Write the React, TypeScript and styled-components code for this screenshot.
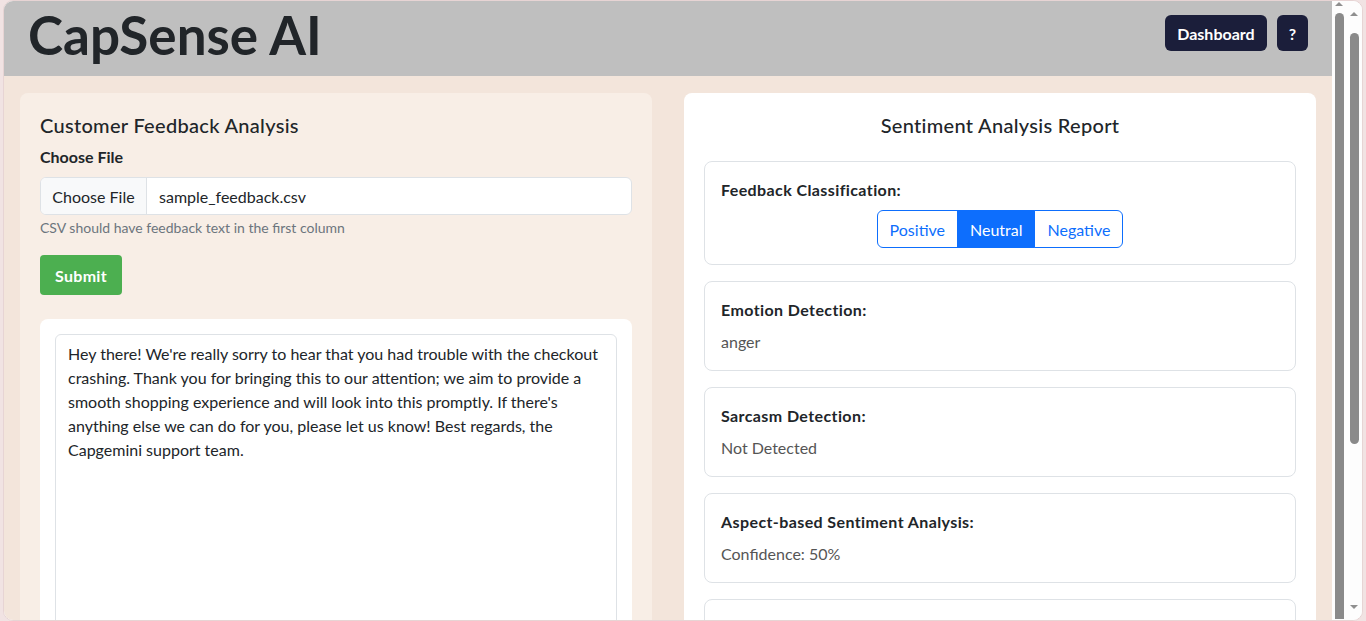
import React from "react";
import styled, { createGlobalStyle } from "styled-components";

const Global = createGlobalStyle`
  html, body { margin: 0; padding: 0; height: 100%; overflow: hidden; background: #f1e3e3; }
  body { font-family: Lato, "Noto Sans", sans-serif; color: #212529; }
  #root { height: 100%; }
  * { box-sizing: border-box; }
`;

const Frame = styled.div`
  height: 621px;
  margin: 0 3px;
  border: 1px solid #e7d4d4;
  border-radius: 10px;
  overflow: hidden;
  display: flex;
  background: #fdfdfd;
`;

const AppColumn = styled.div`
  flex: 0 0 1328px;
  display: flex;
  flex-direction: column;
  min-height: 0;
`;

const Header = styled.header`
  flex: 0 0 75px;
  background: #bfbfbf;
  display: flex;
  align-items: flex-start;
  justify-content: space-between;
  padding: 7px 24px 0;
`;

const Brand = styled.h1`
  margin: 0;
  font-size: 53px;
  font-weight: 700;
  line-height: 1;
  color: #212529;
`;

const HeaderActions = styled.div`
  display: flex;
  gap: 10px;
  margin-top: 7px;
`;

const DarkButton = styled.button`
  height: 36px;
  padding: 0 12px;
  border: none;
  border-radius: 6px;
  background: #1b1e3a;
  color: #fff;
  font: 700 16px Lato, "Noto Sans", sans-serif;
`;

const Main = styled.main`
  flex: 1;
  min-height: 0;
  overflow: hidden;
  background: #f3e5db;
  padding: 17px 16px 0;
  display: grid;
  grid-template-columns: 1fr 1fr;
  gap: 32px;
  align-items: start;
`;

const Card = styled.section<{ $tone: "beige" | "white" }>`
  background: ${(p) => (p.$tone === "beige" ? "#f8eee6" : "#ffffff")};
  border-radius: 8px;
  padding: 20px;
  min-height: 620px;
`;

const CardTitle = styled.h5<{ $center?: boolean }>`
  margin: 0 0 ${(p) => (p.$center ? "24px" : "8px")};
  font-size: 20px;
  font-weight: 500;
  line-height: 24px;
  letter-spacing: 0.3px;
  text-align: ${(p) => (p.$center ? "center" : "left")};
`;

const FieldLabel = styled.div`
  font-size: 16px;
  font-weight: 700;
  line-height: 24px;
  margin-bottom: 8px;
`;

const FileInput = styled.div`
  display: flex;
  height: 38px;
  border: 1px solid #dee2e6;
  border-radius: 6px;
  background: #fff;
  overflow: hidden;
  font-size: 16px;
`;

const FileButton = styled.span`
  flex: 0 0 106px;
  display: flex;
  align-items: center;
  justify-content: center;
  background: #f8f9fa;
  border-right: 1px solid #dee2e6;
`;

const FileName = styled.span`
  display: flex;
  align-items: center;
  padding-left: 12px;
`;

const Help = styled.div`
  margin-top: 2px;
  font-size: 14px;
  line-height: 21px;
  color: #6c757d;
`;

const SubmitButton = styled.button`
  margin-top: 17px;
  height: 40px;
  width: 82px;
  border: none;
  border-radius: 4px;
  background: #4caf50;
  color: #fff;
  font: 700 16px Lato, "Noto Sans", sans-serif;
  letter-spacing: 0.3px;
`;

const TextPanel = styled.div`
  margin-top: 24px;
  background: #fff;
  border-radius: 8px;
  padding: 15px;
`;

const Reply = styled.textarea`
  display: block;
  width: 100%;
  height: 420px;
  border: 1px solid #dee2e6;
  border-radius: 6px;
  padding: 7px 12px;
  font: 400 16px/24px Lato, "Noto Sans", sans-serif;
  color: #212529;
  resize: none;
  outline: none;
  background: #fff;
`;

const SubCard = styled.div`
  border: 1px solid #dee2e6;
  border-radius: 8px;
  padding: 16px;
  margin-bottom: 16px;
`;

const SubTitle = styled.div`
  font-size: 16px;
  font-weight: 700;
  line-height: 24px;
  letter-spacing: 0.4px;
  margin-bottom: 8px;
`;

const Value = styled.div`
  font-size: 16px;
  line-height: 24px;
  color: #555;
`;

const GroupRow = styled.div`
  display: flex;
  justify-content: center;
`;

const Segment = styled.button<{ $active?: boolean }>`
  height: 38px;
  padding: 0 12px;
  border: 1px solid #0d6efd;
  background: ${(p) => (p.$active ? "#0d6efd" : "#fff")};
  color: ${(p) => (p.$active ? "#fff" : "#0d6efd")};
  font: 400 16px Lato, "Noto Sans", sans-serif;
  margin-left: -1px;
  &:first-child { border-radius: 6px 0 0 6px; margin-left: 0; }
  &:last-child { border-radius: 0 6px 6px 0; }
`;

const Track = styled.div<{ $w: number; $pad: number }>`
  flex: 0 0 ${(p) => p.$w}px;
  display: flex;
  flex-direction: column;
  align-items: center;
  background: #fdfdfd;
  padding: ${(p) => p.$pad}px 0;
`;

const Arrow = styled.div<{ $down?: boolean }>`
  width: 0;
  height: 0;
  border-left: 4px solid transparent;
  border-right: 4px solid transparent;
  ${(p) => (p.$down ? "border-top: 4px solid #8f8f8f;" : "border-bottom: 4px solid #8f8f8f;")}
`;

const Thumb = styled.div<{ $h?: number; $top: number }>`
  width: 9px;
  margin-top: ${(p) => p.$top}px;
  border-radius: 5px;
  background: #8a8a8a;
  ${(p) => (p.$h ? `height: ${p.$h}px;` : "flex: 1; border-radius: 5px 5px 0 0;")}
`;

const Spacer = styled.div`
  flex: 1;
`;

const replyText =
  "Hey there! We're really sorry to hear that you had trouble with the checkout crashing. Thank you for bringing this to our attention; we aim to provide a smooth shopping experience and will look into this promptly. If there's anything else we can do for you, please let us know! Best regards, the Capgemini support team.";

export default function App() {
  return (
    <>
      <Global />
      <Frame>
        <AppColumn>
          <Header>
            <Brand>CapSense AI</Brand>
            <HeaderActions>
              <DarkButton>Dashboard</DarkButton>
              <DarkButton>?</DarkButton>
            </HeaderActions>
          </Header>
          <Main>
            <Card $tone="beige">
              <CardTitle>Customer Feedback Analysis</CardTitle>
              <FieldLabel>Choose File</FieldLabel>
              <FileInput>
                <FileButton>Choose File</FileButton>
                <FileName>sample_feedback.csv</FileName>
              </FileInput>
              <Help>CSV should have feedback text in the first column</Help>
              <SubmitButton>Submit</SubmitButton>
              <TextPanel>
                <Reply readOnly value={replyText} />
              </TextPanel>
            </Card>
            <Card $tone="white">
              <CardTitle $center>Sentiment Analysis Report</CardTitle>
              <SubCard>
                <SubTitle>Feedback Classification:</SubTitle>
                <GroupRow>
                  <Segment>Positive</Segment>
                  <Segment $active>Neutral</Segment>
                  <Segment>Negative</Segment>
                </GroupRow>
              </SubCard>
              <SubCard>
                <SubTitle>Emotion Detection:</SubTitle>
                <Value>anger</Value>
              </SubCard>
              <SubCard>
                <SubTitle>Sarcasm Detection:</SubTitle>
                <Value>Not Detected</Value>
              </SubCard>
              <SubCard>
                <SubTitle>Aspect-based Sentiment Analysis:</SubTitle>
                <Value>Confidence: 50%</Value>
              </SubCard>
              <SubCard>
                <SubTitle>&nbsp;</SubTitle>
                <Value>&nbsp;</Value>
              </SubCard>
            </Card>
          </Main>
        </AppColumn>
        <Track $w={14} $pad={1}>
          <Arrow />
          <Thumb $top={7} />
        </Track>
        <Track $w={16} $pad={11}>
          <Arrow />
          <Thumb $top={17} $h={411} />
          <Spacer />
          <Arrow $down />
        </Track>
      </Frame>
    </>
  );
}
